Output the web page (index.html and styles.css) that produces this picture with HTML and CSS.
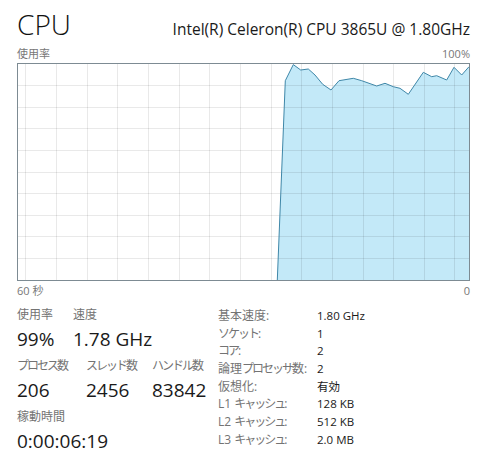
FILE: index.html
```html
<!DOCTYPE html>
<html lang="ja">
<head>
<meta charset="utf-8">
<title>CPU</title>
<link rel="stylesheet" href="styles.css">
</head>
<body>
<div class="page">
  <header class="head">
    <h1 class="title">CPU</h1>
    <div class="model">Intel(R) Celeron(R) CPU 3865U @ 1.80GHz</div>
  </header>

  <div class="axis top-axis">
    <span>使用率</span>
    <span>100%</span>
  </div>

  <div class="chart">
    <svg class="chart-svg" width="451" height="216" viewBox="0 0 451 216" xmlns="http://www.w3.org/2000/svg">
      <polygon class="area" points="259.3,216 267.3,16.7 275.3,0.6 282.7,6 290.3,5 297,11 304.7,20.3 313,26 321,16.7 335.3,14.3 343.7,16.7 358.7,22 367,19.3 375.3,22.7 382,24.3 390.3,30.3 405.3,8.3 413.7,12.7 418.7,11.7 428.7,16 436,3.3 443.7,11 451,2.7 451,216"/>
      <g class="grid">
        <line x1="0" y1="21.5" x2="451" y2="21.5"/>
        <line x1="0" y1="43.5" x2="451" y2="43.5"/>
        <line x1="0" y1="64.5" x2="451" y2="64.5"/>
        <line x1="0" y1="86.5" x2="451" y2="86.5"/>
        <line x1="0" y1="108.5" x2="451" y2="108.5"/>
        <line x1="0" y1="129.5" x2="451" y2="129.5"/>
        <line x1="0" y1="151.5" x2="451" y2="151.5"/>
        <line x1="0" y1="172.5" x2="451" y2="172.5"/>
        <line x1="0" y1="194.5" x2="451" y2="194.5"/>
        <line x1="7.5" y1="0" x2="7.5" y2="216"/>
        <line x1="38.5" y1="0" x2="38.5" y2="216"/>
        <line x1="69.5" y1="0" x2="69.5" y2="216"/>
        <line x1="99.5" y1="0" x2="99.5" y2="216"/>
        <line x1="130.5" y1="0" x2="130.5" y2="216"/>
        <line x1="161.5" y1="0" x2="161.5" y2="216"/>
        <line x1="191.5" y1="0" x2="191.5" y2="216"/>
        <line x1="222.5" y1="0" x2="222.5" y2="216"/>
        <line x1="253.5" y1="0" x2="253.5" y2="216"/>
        <line x1="283.5" y1="0" x2="283.5" y2="216"/>
        <line x1="314.5" y1="0" x2="314.5" y2="216"/>
        <line x1="345.5" y1="0" x2="345.5" y2="216"/>
        <line x1="375.5" y1="0" x2="375.5" y2="216"/>
        <line x1="406.5" y1="0" x2="406.5" y2="216"/>
        <line x1="436.5" y1="0" x2="436.5" y2="216"/>
      </g>
      <polyline class="line" points="259.3,216 267.3,16.7 275.3,0.6 282.7,6 290.3,5 297,11 304.7,20.3 313,26 321,16.7 335.3,14.3 343.7,16.7 358.7,22 367,19.3 375.3,22.7 382,24.3 390.3,30.3 405.3,8.3 413.7,12.7 418.7,11.7 428.7,16 436,3.3 443.7,11 451,2.7"/>
    </svg>
  </div>

  <div class="axis bottom-axis">
    <span>60 秒</span>
    <span>0</span>
  </div>

  <section class="stats">
    <div class="live">
      <div class="row">
        <div class="stat c1">
          <div class="label">使用率</div>
          <div class="value">99%</div>
        </div>
        <div class="stat">
          <div class="label">速度</div>
          <div class="value">1.78 GHz</div>
        </div>
      </div>
      <div class="row">
        <div class="stat c2">
          <div class="label"><span class="kana">プロセス</span>数</div>
          <div class="value">206</div>
        </div>
        <div class="stat c3">
          <div class="label"><span class="kana">スレッド</span>数</div>
          <div class="value">2456</div>
        </div>
        <div class="stat">
          <div class="label"><span class="kana">ハンドル</span>数</div>
          <div class="value">83842</div>
        </div>
      </div>
      <div class="row">
        <div class="stat">
          <div class="label">稼動時間</div>
          <div class="value">0:00:06:19</div>
        </div>
      </div>
    </div>

    <dl class="specs">
      <dt>基本速度:</dt><dd>1.80 GHz</dd>
      <dt><span class="kana">ソケット</span>:</dt><dd>1</dd>
      <dt><span class="kana">コア</span>:</dt><dd>2</dd>
      <dt>論理<span class="kana">プロセッサ</span>数:</dt><dd>2</dd>
      <dt>仮想化:</dt><dd>有効</dd>
      <dt>L1 <span class="kana">キャッシュ</span>:</dt><dd>128 KB</dd>
      <dt>L2 <span class="kana">キャッシュ</span>:</dt><dd>512 KB</dd>
      <dt>L3 <span class="kana">キャッシュ</span>:</dt><dd>2.0 MB</dd>
    </dl>
  </section>
</div>
</body>
</html>
```

FILE: styles.css
```css
html, body {
  margin: 0;
  padding: 0;
  background: #ffffff;
}

body {
  font-family: "Open Sans", "Noto Sans CJK JP", sans-serif;
  color: #1a1a1a;
}

.kana {
  letter-spacing: -2px;
}

.page {
  width: 453px;
  padding: 6px 0 0 17px;
}

.head {
  display: flex;
  justify-content: space-between;
  align-items: baseline;
  height: 36px;
}

.title {
  margin: 0;
  font-size: 28px;
  font-weight: 300;
  line-height: 36px;
  color: #111;
}

.model {
  font-size: 15.5px;
  line-height: 20px;
  color: #1a1a1a;
}

.axis {
  display: flex;
  justify-content: space-between;
  font-size: 11px;
  line-height: 16px;
  color: #777777;
}

.top-axis {
  margin-top: 4px;
  margin-bottom: 1px;
}

.bottom-axis {
  margin-top: 2px;
}

.chart {
  width: 451px;
  height: 216px;
  border: 1px solid #7d8b93;
}

.chart-svg {
  display: block;
}

.area {
  fill: #c3e9f8;
}

.grid line {
  stroke: rgba(0, 0, 0, 0.085);
  stroke-width: 1;
}

.line {
  fill: none;
  stroke: #3f87a8;
  stroke-width: 1;
  stroke-linejoin: round;
}

.stats {
  display: flex;
  align-items: flex-start;
  margin-top: 8px;
}

.live {
  width: 201px;
  display: flex;
  flex-direction: column;
  gap: 7px;
}

.row {
  display: flex;
}

.c1 { width: 56px; }
.c2 { width: 69px; }
.c3 { width: 66px; }

.label {
  font-size: 12px;
  line-height: 16px;
  color: #737373;
}

.value {
  margin-top: 4px;
  font-size: 19px;
  line-height: 24px;
  color: #1a1a1a;
}

.specs {
  margin: 0;
  display: grid;
  grid-template-columns: 99px auto;
  grid-auto-rows: 17.7px;
  font-size: 11.5px;
  line-height: 17.7px;
}

.specs dt {
  font-size: 12px;
  color: #737373;
}

.specs dd {
  margin: 0;
  color: #1a1a1a;
}
```
